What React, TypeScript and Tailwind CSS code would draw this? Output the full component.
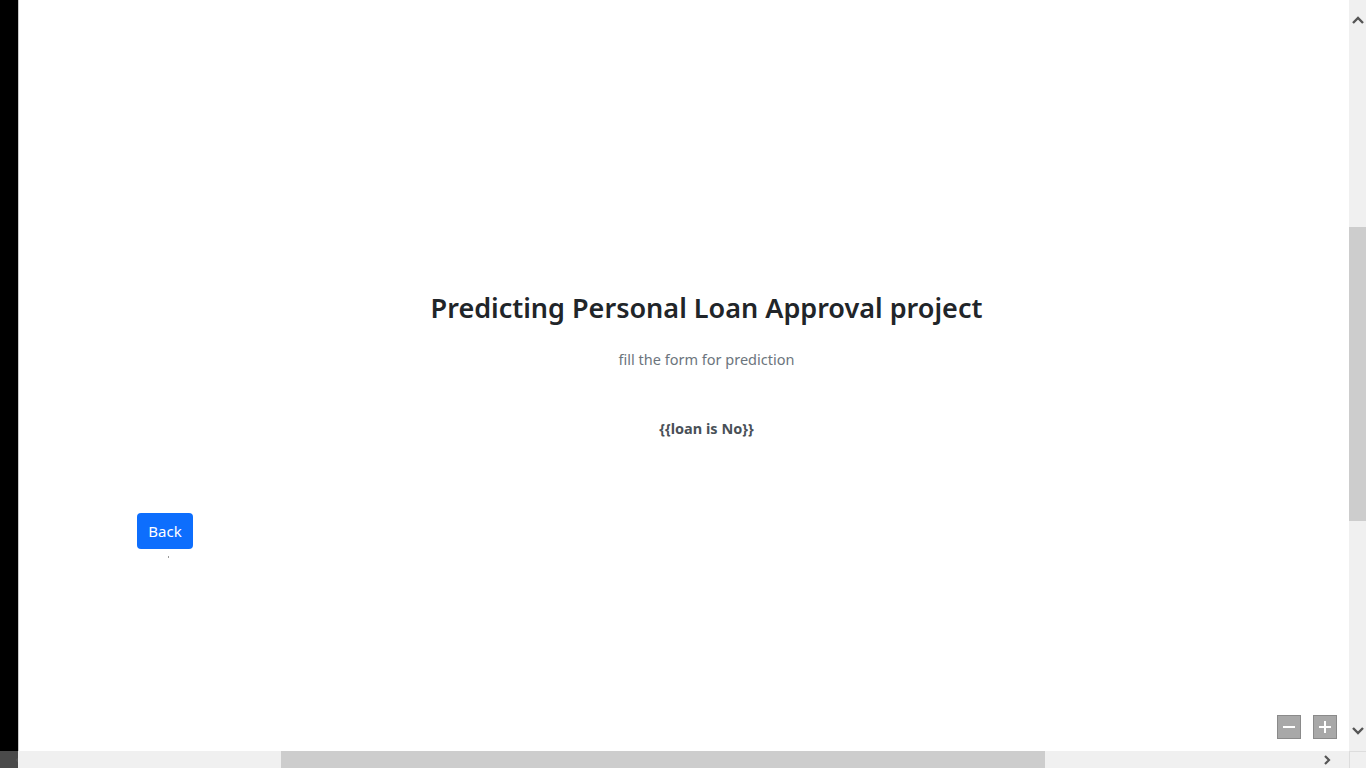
import React from "react";

export default function App() {
  return (
    <div className="flex h-[768px] w-[1366px] overflow-hidden bg-white" style={{ fontFamily: '"Noto Sans", "Open Sans", sans-serif' }}>
      <div className="flex w-[18px] flex-col">
        <div className="flex-1 bg-black" />
        <div className="flex h-[17px] items-center justify-end bg-[#4a4a4a]">
          <svg width="10" height="10" viewBox="0 0 10 10" className="mr-[-6px]">
            <path d="M7 1 L3 5 L7 9" stroke="#555" strokeWidth="2.2" fill="none" />
          </svg>
        </div>
      </div>
      <div className="flex flex-1 flex-col">
        <div className="relative flex-1 border-l border-[#c8c8c8]">
          <div className="flex flex-col items-center pl-[45px] pt-[290px]">
            <h1 className="text-[27px] font-semibold leading-[36px] text-[#212529]">Predicting Personal Loan Approval project</h1>
            <p className="mt-[21px] text-[14.5px] leading-[24px] text-[#6c757d]">fill the form for prediction</p>
            <p className="mt-[45px] text-[14.5px] font-bold leading-[24px] text-[#495057]">{"{{loan is No}}"}</p>
          </div>
          <div className="ml-[118px] mt-[73px] flex flex-col items-start">
            <button className="h-[36px] w-[56px] rounded-[4px] bg-[#0d6efd] text-[15px] text-white">Back</button>
            <div className="ml-[31px] mt-[7px] h-[2px] w-[1px] bg-[#999]" />
          </div>
          <div className="absolute bottom-[12px] right-[12px] flex gap-[12px]">
            <div className="flex h-[24px] w-[24px] items-center justify-center border border-[#8a8a8a] bg-[#a8a8a8]">
              <div className="h-[2px] w-[12px] bg-white" />
            </div>
            <div className="relative flex h-[24px] w-[24px] items-center justify-center border border-[#8a8a8a] bg-[#a8a8a8]">
              <div className="h-[2px] w-[12px] bg-white" />
              <div className="absolute h-[12px] w-[2px] bg-white" />
            </div>
          </div>
        </div>
        <div className="flex h-[17px] items-center bg-[#f0f0f0]">
          <div className="ml-[263px] h-full w-[764px] bg-[#cdcdcd]" />
          <div className="flex-1" />
          <svg width="10" height="10" viewBox="0 0 10 10" className="mr-[17px]">
            <path d="M3 1 L7 5 L3 9" stroke="#555" strokeWidth="2.2" fill="none" />
          </svg>
        </div>
      </div>
      <div className="flex w-[17px] flex-col bg-[#f0f0f0]">
        <div className="flex h-[40px] items-center justify-center">
          <svg width="12" height="10" viewBox="0 0 12 10">
            <path d="M1 8 L6 3 L11 8" stroke="#555" strokeWidth="2.4" fill="none" />
          </svg>
        </div>
        <div className="mt-[187px] h-[294px] w-full bg-[#cdcdcd]" />
        <div className="flex-1" />
        <div className="flex h-[40px] items-center justify-center">
          <svg width="12" height="10" viewBox="0 0 12 10">
            <path d="M1 2 L6 7 L11 2" stroke="#555" strokeWidth="2.4" fill="none" />
          </svg>
        </div>
        <div className="h-[17px] border-l border-t border-[#ddd] bg-[#f0f0f0]" />
      </div>
    </div>
  );
}
